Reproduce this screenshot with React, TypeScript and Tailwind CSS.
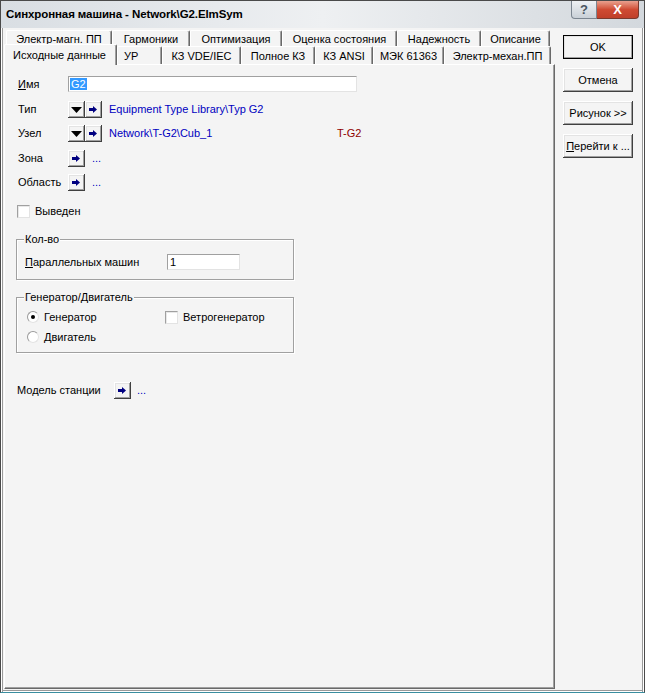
import React from 'react'

const FONT = { fontFamily: '"Liberation Sans", Arial, sans-serif' }

const raised =
  'bg-[#f4f4f4] shadow-[inset_-1px_-1px_0_#404040,inset_1px_1px_0_#ffffff,inset_-2px_-2px_0_#a0a0a0,inset_2px_2px_0_#e3e3e3]'
const sunken = 'bg-white border border-t-[#a0a0a0] border-l-[#a0a0a0] border-r-[#e3e3e3] border-b-[#e3e3e3]'

const TOP_TABS = [
  { label: 'Электр-магн. ПП', w: 'w-[106px]' },
  { label: 'Гармоники', w: 'w-[78px]' },
  { label: 'Оптимизация', w: 'w-[92px]' },
  { label: 'Оценка состояния', w: 'w-[115px]' },
  { label: 'Надежность', w: 'w-[84px]' },
  { label: 'Описание', w: 'w-[69px]' },
]

const BOTTOM_TABS = [
  { label: 'УР', w: 'w-[45px]', align: 'justify-start pl-[6px]' },
  { label: 'КЗ VDE/IEC', w: 'w-[79px]', align: 'justify-center' },
  { label: 'Полное КЗ', w: 'w-[74px]', align: 'justify-center' },
  { label: 'КЗ ANSI', w: 'w-[58px]', align: 'justify-center' },
  { label: 'МЭК 61363', w: 'w-[71px]', align: 'justify-center' },
  { label: 'Электр-механ.ПП', w: 'w-[107px]', align: 'justify-center' },
]

function ArrowBtn() {
  return (
    <div className={`w-[17px] h-[17px] flex items-center justify-center ${raised}`}>
      <svg width="9" height="7" viewBox="0 0 9 7">
        <rect x="0" y="2" width="5" height="3" fill="#000080" />
        <polygon points="4,0 8,3.5 4,7" fill="#000080" />
      </svg>
    </div>
  )
}

function DropBtn() {
  return (
    <div className={`w-[17px] h-[17px] flex items-center justify-center ${raised}`}>
      <svg width="11" height="6" viewBox="0 0 11 6">
        <polygon points="0,0 11,0 5.5,6" fill="#000" />
      </svg>
    </div>
  )
}

function Checkbox() {
  return <div className={`w-[13px] h-[13px] ${sunken} shadow-[inset_1px_1px_0_#e8e8e8]`} />
}

function Radio({ checked }: { checked?: boolean }) {
  return (
    <div className="w-[12px] h-[12px] rounded-full bg-white border border-t-[#9a9a9a] border-l-[#9a9a9a] border-r-[#e3e3e3] border-b-[#e3e3e3] flex items-center justify-center">
      {checked && <div className="w-[4px] h-[4px] rounded-full bg-black" />}
    </div>
  )
}

function SideButton({ label, def }: { label: React.ReactNode; def?: boolean }) {
  return (
    <div
      className={`w-[70px] h-[24px] flex items-center justify-center text-[11px] text-black ${raised} ${
        def ? 'outline outline-1 outline-black -outline-offset-1' : ''
      }`}
    >
      {label}
    </div>
  )
}

function Group({ title, className, children }: { title: string; className: string; children: React.ReactNode }) {
  return (
    <div className={`relative w-[278px] border border-[#a0a0a0] shadow-[1px_1px_0_#fff,inset_1px_1px_0_#fff] ${className}`}>
      <span className="absolute -top-[8px] left-[7px] px-[1px] bg-[#f4f4f4] leading-[14px]">{title}</span>
      {children}
    </div>
  )
}

export default function App() {
  return (
    <div
      style={FONT}
      className="w-[645px] h-[693px] bg-[#f4f4f4] border border-[#4a4a4a] border-b-[#3a8ea0] flex flex-col text-[11px] text-black overflow-hidden shadow-[inset_1px_0_0_#ffffff,inset_2px_0_0_#9a9a9a,inset_-1px_0_0_#ffffff,inset_-2px_0_0_#9a9a9a,inset_0_-1px_0_#ffffff,inset_0_-2px_0_#9a9a9a]"
    >
      {/* ── title bar ── */}
      <div className="h-[27px] shrink-0 flex items-start bg-gradient-to-r from-[#d9dee3] via-[#eef0f2] to-[#d3d8dd]">
        <span className="mt-[6px] ml-[5px] text-[11.5px] font-bold leading-[14px] tracking-[-0.1px]">
          Синхронная машина - Network\G2.ElmSym
        </span>
        <div className="ml-auto mr-[5px] flex">
          <div className="w-[26px] h-[18px] rounded-bl-[4px] border border-t-0 border-[#7b8590] bg-gradient-to-b from-[#eef1f4] to-[#c9d0d7] flex items-center justify-center text-[13px] font-bold text-[#4a5560]">
            ?
          </div>
          <div className="w-[42px] h-[18px] rounded-br-[4px] border border-t-0 border-l-0 border-[#7a3a2e] bg-gradient-to-b from-[#e8a08e] via-[#cf4b33] to-[#c0402a] flex items-center justify-center text-[13px] font-bold text-white">
            X
          </div>
        </div>
      </div>

      <div className="flex flex-1 pl-[3px] pb-[3px]">
        {/* ── left: tabs + page ── */}
        <div className="w-[551px] flex flex-col">
          <div className="flex mt-[2px] pl-[2px] h-[16px]">
            {TOP_TABS.map(t => (
              <div
                key={t.label}
                className={`${t.w} h-[18px] flex items-start justify-center pt-[1px] rounded-t-[2px] border-t border-l border-white border-r border-r-[#696969] shadow-[inset_-1px_0_0_#a0a0a0] leading-[14px]`}
              >
                {t.label}
              </div>
            ))}
          </div>
          <div className="flex items-end h-[20px] -mt-[2px] relative z-10">
            <div className="w-[113px] h-[21px] -mb-[1px] bg-[#f4f4f4] flex items-start pl-[8px] pt-[3px] rounded-t-[2px] border-t border-l border-white border-r border-r-[#696969] shadow-[inset_-1px_0_0_#a0a0a0] leading-[14px]">
              Исходные данные
            </div>
            {BOTTOM_TABS.map(t => (
              <div
                key={t.label}
                className={`${t.w} h-[18px] bg-[#f4f4f4] flex items-start ${t.align} pt-[2px] rounded-t-[2px] border-t border-l border-white border-r border-r-[#696969] shadow-[inset_-1px_0_0_#a0a0a0] leading-[14px]`}
              >
                {t.label}
              </div>
            ))}
          </div>

          {/* ── page ── */}
          <div className="flex-1 border border-white border-r-[#696969] border-b-[#696969] shadow-[inset_-1px_-1px_0_#a0a0a0] pl-[13px] pt-[11px]">
            <div className="flex items-center h-[16px]">
              <span className="w-[50px]">
                <span className="underline">И</span>мя
              </span>
              <div className={`w-[289px] h-[16px] ${sunken} flex items-center pl-[1px]`}>
                <span className="bg-[#3399ff] text-white leading-[12px] px-[1px]">G2</span>
              </div>
            </div>

            <div className="flex items-center h-[17px] mt-[9px]">
              <span className="w-[50px]">Тип</span>
              <DropBtn />
              <ArrowBtn />
              <span className="ml-[7px] text-[#0000c0]">Equipment Type Library\Typ G2</span>
            </div>

            <div className="flex items-center h-[17px] mt-[7px]">
              <span className="w-[50px]">Узел</span>
              <DropBtn />
              <ArrowBtn />
              <span className="ml-[7px] w-[228px] text-[#0000c0]">Network\T-G2\Cub_1</span>
              <span className="text-[#900000]">T-G2</span>
            </div>

            <div className="flex items-center h-[17px] mt-[8px]">
              <span className="w-[50px]">Зона</span>
              <ArrowBtn />
              <span className="ml-[7px] text-[#0000c0]">...</span>
            </div>

            <div className="flex items-center h-[17px] mt-[7px]">
              <span className="w-[50px]">Область</span>
              <ArrowBtn />
              <span className="ml-[7px] text-[#0000c0]">...</span>
            </div>

            <div className="flex items-center h-[13px] mt-[14px] -ml-[1px] gap-[5px]">
              <Checkbox />
              <span>Выведен</span>
            </div>

            <Group title="Кол-во" className="h-[41px] mt-[21px] -ml-[2px]">
              <div className="flex items-center mt-[14px] ml-[8px]">
                <span className="w-[142px]">
                  <span className="underline">П</span>араллельных машин
                </span>
                <div className={`w-[73px] h-[16px] ${sunken} flex items-center pl-[2px]`}>1</div>
              </div>
            </Group>

            <Group title="Генератор/Двигатель" className="h-[56px] mt-[17px] -ml-[2px]">
              <div className="flex items-center mt-[12px] ml-[10px] h-[14px]">
                <div className="w-[138px] flex items-center gap-[5px]">
                  <Radio checked />
                  <span>Генератор</span>
                </div>
                <div className="flex items-center gap-[5px]">
                  <Checkbox />
                  <span>Ветрогенератор</span>
                </div>
              </div>
              <div className="flex items-center mt-[6px] ml-[10px] h-[14px] gap-[5px]">
                <Radio />
                <span>Двигатель</span>
              </div>
            </Group>

            <div className="flex items-center h-[17px] mt-[29px] -ml-[1px]">
              <span className="w-[97px]">Модель станции</span>
              <ArrowBtn />
              <span className="ml-[6px] text-[#0000c0]">...</span>
            </div>
          </div>
        </div>

        {/* ── right: buttons ── */}
        <div className="ml-[8px] pt-[7px] flex flex-col gap-[9px]">
          <SideButton label="OK" def />
          <SideButton label="Отмена" />
          <SideButton label="Рисунок >>" />
          <SideButton
            label={
              <span>
                <span className="underline">П</span>ерейти к ...
              </span>
            }
          />
        </div>
      </div>
    </div>
  )
}
